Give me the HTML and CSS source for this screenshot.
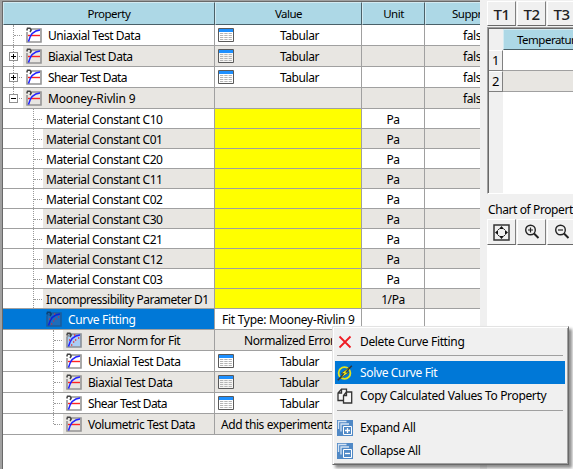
FILE: index.html
```html
<!DOCTYPE html>
<html lang="en">
<head>
<meta charset="utf-8">
<title>Material Properties</title>
<link rel="stylesheet" href="styles.css">
</head>
<body>
<svg class="defs" aria-hidden="true">
  <symbol id="curve" viewBox="0 0 16 16">
    <path d="M5 2H15V15H1V5" fill="none" stroke="#949494" stroke-width="1.6"/>
    <path d="M2 8.500H14" stroke="#f22" stroke-width="1.400"/>
    <path d="M2.500 14.500C4 8 7 3.500 14 3" fill="none" stroke="#22f" stroke-width="1.500"/>
    <path d="M.8 3.500L1.500 1.200H4L5.200 3L4 5" fill="none" stroke="#444" stroke-width="1.500"/>
  </symbol>
  <symbol id="fit" viewBox="0 0 16 16">
    <path d="M5 2H15V15H1V5L4 2Z" fill="#a9cdf5" stroke="#8a9097" stroke-width="1.600"/>
    <path d="M2.500 14.500C4 8 7 3.500 14 3" fill="none" stroke="#22f" stroke-width="1.500"/>
    <path d="M5 13h1.300M7 10h1.300M9 8h1.300M12 6h1.300M3 8h1.300M8 3h1.300" stroke="#e33" stroke-width="1.300"/>
    <path d="M.8 3.500L1.500 1.200H4L5.200 3L4 5" fill="none" stroke="#444" stroke-width="1.500"/>
  </symbol>
  <symbol id="fitsel" viewBox="0 0 16 16">
    <path d="M5 2H15V15H1V5L4 2Z" fill="#1d6dbb" stroke="#1c5c9b" stroke-width="1.600"/>
    <path d="M2.500 14.500C4 8 7 3.500 14 3" fill="none" stroke="#0a22dc" stroke-width="1.500"/>
    <path d="M5 13h1.300M7 10h1.300M9 8h1.300M12 6h1.300M3 8h1.300M8 3h1.300" stroke="#a8385c" stroke-width="1.300"/>
    <path d="M.8 3.500L1.500 1.200H4L5.200 3L4 5" fill="none" stroke="#0d3f70" stroke-width="1.500"/>
  </symbol>
  <symbol id="table" viewBox="0 0 16 14">
    <path d="M.5 .5H15.500V13.500H.5Z" fill="#fff" fill-opacity=".6" stroke="#5a5a5a"/>
    <path d="M1 1H15V4H1Z" fill="#1e90ff"/>
    <path d="M2 5.500H14M2 7.500H14M2 9.500H14M2 11.500H14" stroke="#b4b4b4" stroke-dasharray="3.300 1"/>
  </symbol>
</svg>
<main class="app">
  <section class="props">
    <div class="row head"><div>Property</div><div>Value</div><div>Unit</div><div class="sup"><span>Suppressed</span></div></div>
    <div class="row l0"><div class="name"><i class="tree first"></i><svg class="ic"><use href="#curve"/></svg><span class="t">Uniaxial Test Data</span></div><div class="val"><svg class="tb"><use href="#table"/></svg><span>Tabular</span></div><div></div><div class="flag">false</div></div>
    <div class="row l0 alt"><div class="name"><i class="tree"><b class="box plus"></b></i><svg class="ic"><use href="#curve"/></svg><span class="t">Biaxial Test Data</span></div><div class="val"><svg class="tb"><use href="#table"/></svg><span>Tabular</span></div><div></div><div class="flag">false</div></div>
    <div class="row l0"><div class="name"><i class="tree"><b class="box plus"></b></i><svg class="ic"><use href="#curve"/></svg><span class="t tight">Shear Test Data</span></div><div class="val"><svg class="tb"><use href="#table"/></svg><span>Tabular</span></div><div></div><div class="flag">false</div></div>
    <div class="row l0 alt"><div class="name"><i class="tree last"><b class="box"></b></i><svg class="ic"><use href="#curve"/></svg><span class="t loose">Mooney-Rivlin 9</span></div><div></div><div></div><div class="flag">false</div></div>
    <div class="row l1"><div class="name"><i class="tree"></i><span class="t">Material Constant C10</span></div><div class="yel"></div><div class="unit">Pa</div><div></div></div>
    <div class="row l1 alt"><div class="name"><i class="tree"></i><span class="t">Material Constant C01</span></div><div class="yel"></div><div class="unit">Pa</div><div></div></div>
    <div class="row l1"><div class="name"><i class="tree"></i><span class="t">Material Constant C20</span></div><div class="yel"></div><div class="unit">Pa</div><div></div></div>
    <div class="row l1 alt"><div class="name"><i class="tree"></i><span class="t">Material Constant C11</span></div><div class="yel"></div><div class="unit">Pa</div><div></div></div>
    <div class="row l1"><div class="name"><i class="tree"></i><span class="t">Material Constant C02</span></div><div class="yel"></div><div class="unit">Pa</div><div></div></div>
    <div class="row l1 alt"><div class="name"><i class="tree"></i><span class="t">Material Constant C30</span></div><div class="yel"></div><div class="unit">Pa</div><div></div></div>
    <div class="row l1"><div class="name"><i class="tree"></i><span class="t">Material Constant C21</span></div><div class="yel"></div><div class="unit">Pa</div><div></div></div>
    <div class="row l1 alt"><div class="name"><i class="tree"></i><span class="t">Material Constant C12</span></div><div class="yel"></div><div class="unit">Pa</div><div></div></div>
    <div class="row l1"><div class="name"><i class="tree"></i><span class="t">Material Constant C03</span></div><div class="yel"></div><div class="unit">Pa</div><div></div></div>
    <div class="row l1 alt"><div class="name"><i class="tree"></i><span class="t param">Incompressibility Parameter D1</span></div><div class="yel"></div><div class="unit">1/Pa</div><div></div></div>
    <div class="row l1 tall sel"><div class="name"><i class="tree"></i><svg class="ic"><use href="#fitsel"/></svg><span class="t">Curve Fitting</span></div><div class="fittype">Fit Type: Mooney-Rivlin 9</div><div></div><div></div></div>
    <div class="row l2 alt"><div class="name"><i class="tree"></i><svg class="ic"><use href="#fit"/></svg><span class="t">Error Norm for Fit</span></div><div class="norm">Normalized Error</div><div></div><div></div></div>
    <div class="row l2"><div class="name"><i class="tree"></i><svg class="ic"><use href="#curve"/></svg><span class="t">Uniaxial Test Data</span></div><div class="val"><svg class="tb"><use href="#table"/></svg><span>Tabular</span></div><div></div><div></div></div>
    <div class="row l2 alt"><div class="name"><i class="tree"></i><svg class="ic"><use href="#curve"/></svg><span class="t">Biaxial Test Data</span></div><div class="val"><svg class="tb"><use href="#table"/></svg><span>Tabular</span></div><div></div><div></div></div>
    <div class="row l2"><div class="name"><i class="tree"></i><svg class="ic"><use href="#curve"/></svg><span class="t tight">Shear Test Data</span></div><div class="val"><svg class="tb"><use href="#table"/></svg><span>Tabular</span></div><div></div><div></div></div>
    <div class="row l2 alt"><div class="name"><i class="tree last"></i><svg class="ic"><use href="#curve"/></svg><span class="t">Volumetric Test Data</span></div><div class="add">Add this experimental</div><div></div><div></div></div>
  </section>
  <section class="side">
    <nav class="tabs"><button>T1</button><button>T2</button><button>T3</button></nav>
    <div class="sheet">
      <div class="srow shead"><div class="corner"></div><div class="temp">Temperature</div></div>
      <div class="srow"><div class="num">1</div><div class="cell"></div></div>
      <div class="srow"><div class="num">2</div><div class="cell grey"></div></div>
      <div class="rest"></div>
    </div>
    <div class="title">Chart of Properties</div>
    <nav class="tools">
      <button><svg width="17" height="17" viewBox="0 0 17 17"><path d="M1 1H16V16H1Z" fill="none" stroke="#333" stroke-width="1.500"/><path d="M8.500 2L11 5H6ZM8.500 15L6 12H11ZM2 8.500L5 6V11ZM15 8.500L12 6V11Z" fill="#111"/><path d="M5 5.500h1.200M10.800 5.500h1.200M5 11.500h1.200M10.800 11.500h1.200" stroke="#333"/></svg></button>
      <button><svg width="16" height="16" viewBox="0 0 16 16"><circle cx="6.500" cy="6" r="4.800" fill="none" stroke="#222" stroke-width="1.400"/><path d="M4 6H9M6.500 3.500V8.500" stroke="#222" stroke-width="1.200"/><path d="M10 9.500L14.500 14" stroke="#222" stroke-width="2"/></svg></button>
      <button><svg width="16" height="16" viewBox="0 0 16 16"><circle cx="6.500" cy="6" r="4.800" fill="none" stroke="#222" stroke-width="1.400"/><path d="M4 6H9" stroke="#222" stroke-width="1.200"/><path d="M10 9.500L14.500 14" stroke="#222" stroke-width="2"/></svg></button>
    </nav>
    <div class="chart"></div>
  </section>
</main>
<div class="menu">
  <div class="item"><svg viewBox="0 0 16 16"><path d="M2.500 2.500L13.500 13.500M13.500 2.500L2.500 13.500" stroke="#ee1c24" stroke-width="1.800"/></svg><span>Delete Curve Fitting</span></div>
  <hr>
  <div class="item hot"><svg viewBox="0 0 16 16"><circle cx="7.500" cy="8" r="5.900" fill="none" stroke="#e4e41c" stroke-width="1.800"/><path d="M.8 15.200L14.800 .8" stroke="#333" stroke-width="1.600"/><path d="M12 2.500L4 8.500H7.200L3.500 13.500L12 7.300H8.700Z" fill="#f4f01c" stroke="#443" stroke-width=".7"/></svg><span>Solve Curve Fit</span></div>
  <div class="item"><svg viewBox="0 0 16 16"><g fill="#f4f4f4" stroke="#333" stroke-width="1.300"><path d="M4.500 1.200H9.500V12.500H1V5ZM4.500 1.200V5H1"/><path d="M9.500 4H14.700V15H6.500V7.500ZM9.500 4V7.500H6.500"/></g></svg><span>Copy Calculated Values To Property</span></div>
  <hr class="lower">
  <div class="item"><svg viewBox="0 0 16 16"><path d="M0 0H16V16H0Z" fill="#5089c6"/><path d="M1.500 9V1.500H9.500M4 11.500V4H12" fill="none" stroke="#d5e4f4" stroke-width="1.300"/><path d="M6.500 6.500H14.500V14.500H6.500Z" fill="#5089c6" stroke="#fff"/><path d="M8 10.500H13M10.500 8V13" stroke="#fff" stroke-width="1.300"/></svg><span>Expand All</span></div>
  <div class="item"><svg viewBox="0 0 16 16"><path d="M0 0H16V16H0Z" fill="#5089c6"/><path d="M1.500 9V1.500H9.500M4 11.500V4H12" fill="none" stroke="#d5e4f4" stroke-width="1.300"/><path d="M6.500 6.500H14.500V14.500H6.500Z" fill="#5089c6" stroke="#fff"/><path d="M8 10.500H13" stroke="#fff" stroke-width="1.300"/></svg><span>Collapse All</span></div>
</div>
</body>
</html>
```
FILE: styles.css
```css
* { box-sizing: border-box; }
body { margin: 0; width: 573px; height: 469px; overflow: hidden; background: #f0f0f0; color: #000; font: 12px/18px "Noto Sans", "Open Sans", sans-serif; letter-spacing: -0.4px; white-space: nowrap; }
.defs { position: absolute; width: 0; height: 0; }
.app { display: grid; grid-template-columns: 480px 1fr; column-gap: 7px; height: 469px; }
.props { overflow: hidden; background: #fff; border-left: 2px solid #a0a0a0; border-top: 1px solid #a0a0a0; box-shadow: inset 1px 1px #696969; padding: 1px 0 0 1px; }
.row { display: grid; grid-template-columns: 212px 147px 63px 55px; height: 21px; }
.row > div { border-right: 1px solid #a0a0a0; border-bottom: 1px solid #a0a0a0; display: flex; align-items: center; overflow: hidden; padding-top: 1px; }
.row > .name { padding-top: 0; }
.row > div:last-child { border-right: 0; }
.name .t { margin-top: 2px; letter-spacing: -.46px; }
.name .tight { letter-spacing: -.6px; }
.name .loose { letter-spacing: -.14px; }
.l1 { height: 20px; }
.l1 .name .t { letter-spacing: -.4px; }
.l1 .name .param { letter-spacing: -.5px; }
.l1.sel .name .t { letter-spacing: -.32px; }
.tall { height: 21px; }
.alt > div { background: #e8e6e2; }
.row.head { height: 23px; font-size: 11.5px; letter-spacing: -.5px; }
.head > div { background: #add8e6; justify-content: center; border-color: #4a6068; border-left: 1px solid #d3eaf1; border-top: 1px solid #d3eaf1; padding-top: 0; }
.head > div.sup { justify-content: flex-start; padding-left: 26px; }
.row > .yel { background: #ff0; }
.row > .unit { justify-content: center; padding-top: 2px; }
.row > .flag { padding-left: 38px; }
.row > .fittype { padding-left: 7px; letter-spacing: -.27px; padding-top: 2px; }
.row > .norm { padding-left: 29px; }
.row > .add { padding-left: 6px; }
.val span { flex: 1; text-align: center; }
.tb { width: 16px; height: 14px; margin: -1px 4px 0 3px; flex: none; }
.ic { width: 16px; height: 16px; margin: 0 6px 0 3px; flex: none; }
.tree { position: relative; align-self: stretch; flex: none; width: 20px; background: #fff; }
.l1 .tree { width: 40px; }
.l2 .tree { width: 60px; }
.l1 .name .t { padding-left: 3px; }
.tree::before { content: ""; position: absolute; right: 9px; top: 0; bottom: 0; border-left: 1px dotted #999; }
.tree::after { content: ""; position: absolute; right: 1px; width: 8px; top: 10px; border-top: 1px dotted #999; }
.tree.last::before { bottom: 10px; }
.box { position: absolute; z-index: 1; left: 6px; top: 6px; width: 9px; height: 9px; border: 1px solid #919191; background: linear-gradient(#000, #000) center / 5px 1px no-repeat #fff; }
.box.plus { background: linear-gradient(#000, #000) center / 5px 1px no-repeat, linear-gradient(#000, #000) center / 1px 5px no-repeat #fff; }
.sel .name { background: #0078d7; color: #fff; }
.sel .tree { background: none; }
.sel .tree::before, .sel .tree::after { display: none; }
.sel .name .t { padding: 0; }
.side { overflow: hidden; display: flex; flex-direction: column; }
button { flex: none; padding: 0; background: #f0f0f0; border: 1px solid; border-color: #fff #808080 #696969 #fff; color: #222; display: flex; align-items: center; justify-content: center; }
.tabs { display: flex; gap: 1px; height: 26px; padding-top: 1px; }
.tabs button { width: 29px; font: 500 15px/18px "Noto Sans", sans-serif; letter-spacing: -.5px; }
.sheet { margin-top: 1px; height: 167px; border: solid #a0a0a0; border-width: 1px 0 0 1px; border-bottom: 1px solid #fff; box-shadow: inset 1px 1px #696969; padding: 1px 0 0 1px; display: flex; flex-direction: column; }
.srow { display: flex; height: 21px; }
.corner, .num { width: 14px; flex: none; }
.num { font-size: 13px; border-right: 1px solid #808080; border-bottom: 1px solid #808080; border-top: 1px solid #fff; text-align: center; line-height: 19px; }
.num + .cell { background: #fff; border-bottom: 1px solid #a0a0a0; flex: 1; }
.num + .grey { background: #e8e6e2; }
.temp { flex: 1; background: #add8e6; border-top: 1px solid #d3eaf1; border-bottom: 1px solid #4a6068; border-left: 1px solid #d3eaf1; padding: 1px 0 0 13px; font-size: 11.5px; letter-spacing: -.5px; }
.rest { flex: 1; margin-left: 14px; background: #fff; }
.title { height: 25px; padding: 7px 0 0 1px; }
.tools { display: flex; gap: 1px; height: 26px; }
.tools button { width: 29px; }
.chart { flex: 1; background: #fff; }
.menu { position: absolute; left: 332px; top: 326px; width: 237px; height: 139px; background: #f0f0f0; border: 1px solid; border-color: #e3e3e3 #696969 #696969 #e3e3e3; box-shadow: inset 1px 1px #fff, inset -1px -1px #a0a0a0, 3px 3px 3px rgba(0,0,0,.45); padding: 3px 3px 0 2px; letter-spacing: -.35px; }
.item { display: flex; align-items: center; height: 23px; padding-left: 2px; }
.item svg { width: 16px; height: 16px; margin-right: 7px; }
.hot { background: #0078d7; color: #fff; }
.menu hr { margin: 2px 2px 5px; border: 0; border-top: 1px solid #a0a0a0; }
.menu .lower { margin-top: 3px; margin-bottom: 5px; }
```
